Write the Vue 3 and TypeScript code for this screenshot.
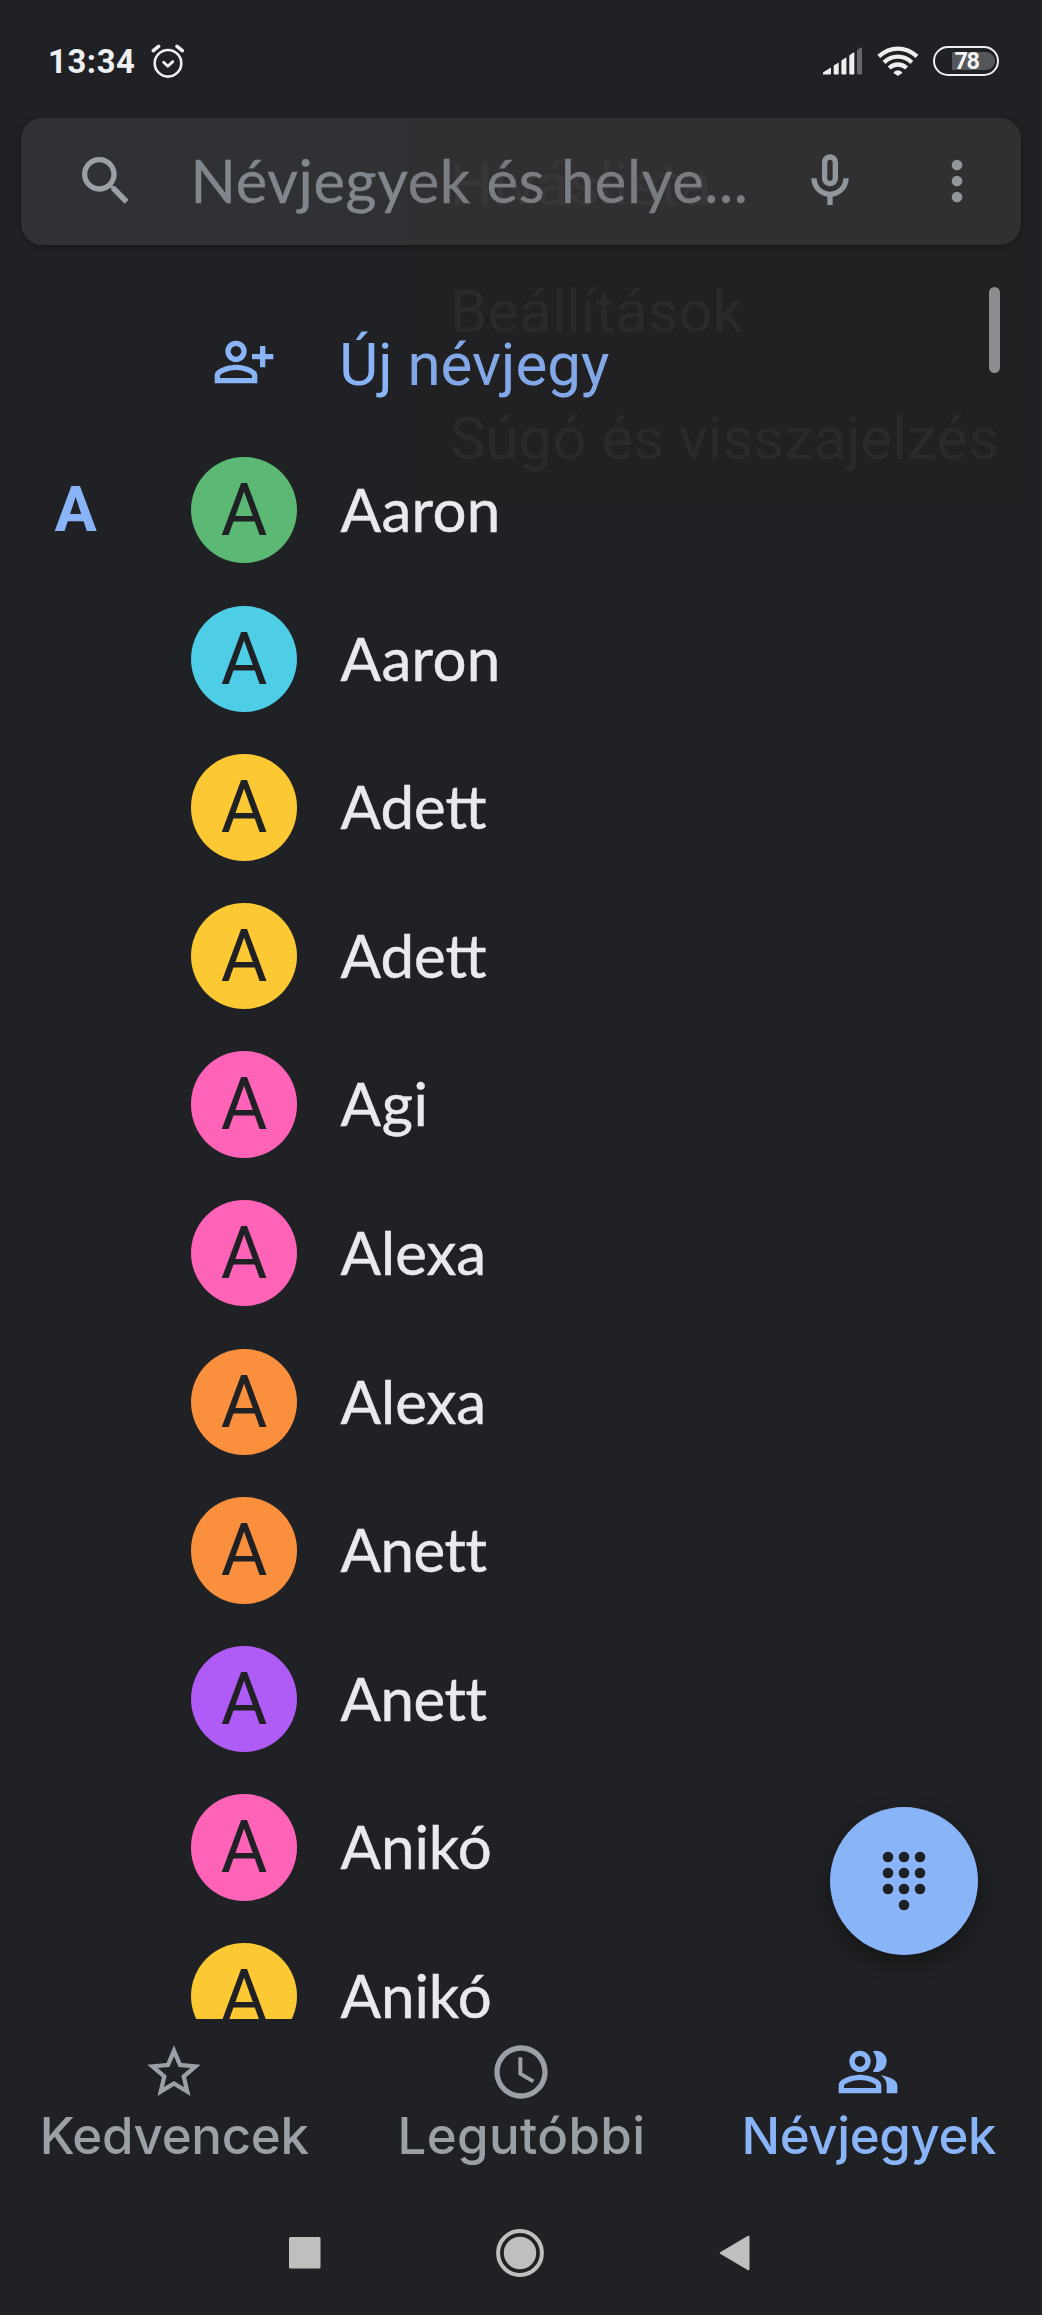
<script setup lang="ts">
interface Contact {
  name: string
  color: string
  spacing?: number
}

const green = '#5bb974'
const cyan = '#4ecde6'
const yellow = '#fcc934'
const pink = '#ff63b8'
const orange = '#fa903e'
const purple = '#af5cf7'

const contacts: Contact[] = [
  { name: 'Aaron', color: green, spacing: 0.3 },
  { name: 'Aaron', color: cyan, spacing: 0.3 },
  { name: 'Adett', color: yellow },
  { name: 'Adett', color: yellow },
  { name: 'Agi', color: pink, spacing: 0.6 },
  { name: 'Alexa', color: pink },
  { name: 'Alexa', color: orange },
  { name: 'Anett', color: orange, spacing: -0.5 },
  { name: 'Anett', color: purple, spacing: -0.5 },
  { name: 'Anikó', color: pink },
  { name: 'Anikó', color: yellow },
]

const menuItems: string[] = ['Híváslista', 'Beállítások', 'Súgó és visszajelzés']

const keypadDots: [number, number][] = [
  [6, 3], [12, 3], [18, 3],
  [6, 9], [12, 9], [18, 9],
  [6, 15], [12, 15], [18, 15],
  [12, 21],
]
</script>

<template>
  <div class="screen">
    <header class="status">
      <span class="time">13:34</span>
      <svg class="alarm" viewBox="0 0 34 34" width="34" height="34" fill="none" stroke="#eeeff1" stroke-linecap="round">
        <circle cx="17" cy="19.3" r="13.3" stroke-width="2.6" />
        <path d="M12.6 18.2l4.2 4 5-4.6" stroke-width="2.8" stroke-linejoin="round" />
        <path d="M2.3 6.6L7.6 2.3M31.3 6.6L26 2.3" stroke-width="3.6" />
      </svg>
      <span class="grow"></span>
      <svg class="signal" viewBox="0 0 39 28" width="39" height="28" fill="#eeeff1">
        <path d="M0 27.6v-2.2l7.4-4.6q.6-.2.6.4v5.4q0 1-1 1z" />
        <path d="M10.7 18.6l5-3v11q0 1-1 1h-3q-1 0-1-1z" />
        <path d="M18.4 13.4l5-3.2v16.4q0 1-1 1h-3q-1 0-1-1z" />
        <path d="M26.3 8.4l4-2.8q1-.5 1 .6v20.4q0 1-1 1h-3q-1 0-1-1z" />
        <path d="M34 3.2l4-2.8q1-.5 1 .6v25.6q0 1-1 1h-3q-1 0-1-1z" fill="#67686b" />
      </svg>
      <svg class="wifi" viewBox="0 0 42 30" width="42" height="30" fill="none" stroke="#eeeff1" stroke-width="4.3">
        <path d="M1.8 10.4Q10.6 2.6 20.900 2.6t19.100 7.8" />
        <path d="M7 16.300q6.200-5.600 13.900-5.600t13.900 5.600" />
        <path d="M12.200 22q3.900-3.500 8.700-3.500t8.700 3.500" />
        <path d="M16.800 26q4.100-3.400 8.200 0 .4.600-.2 1.200L21.600 29.600q-.7.500-1.400 0L17 27.200q-.6-.6-.2-1.200z" fill="#eeeff1" stroke="none" />
      </svg>
      <span class="battery"><span class="level">78</span></span>
    </header>

    <div class="search">
      <svg class="icon" viewBox="0 0 24 24" fill="#9aa0a6">
        <path d="M15.5 14h-.79l-.28-.27C15.41 12.59 16 11.11 16 9.5 16 5.91 13.09 3 9.5 3S3 5.91 3 9.5 5.91 16 9.5 16c1.61 0 3.09-.59 4.23-1.57l.27.28v.79l5 4.99L20.49 19l-4.99-5zm-6 0C7.01 14 5 11.99 5 9.5S7.01 5 9.5 5 14 7.01 14 9.5 11.99 14 9.5 14z" />
      </svg>
      <span class="hint">Névjegyek és helye...</span>
      <svg class="icon" viewBox="0 0 24 24" fill="#9aa0a6">
        <path fill-rule="evenodd" d="M12 14c1.66 0 3-1.34 3-3V5c0-1.66-1.34-3-3-3S9 3.34 9 5v6c0 1.66 1.34 3 3 3zm-1-9c0-.55.45-1 1-1s1 .45 1 1v6c0 .55-.45 1-1 1s-1-.45-1-1V5zm6 6c0 2.76-2.24 5-5 5s-5-2.24-5-5H5c0 3.53 2.61 6.43 6 6.92V21h2v-3.08c3.39-.49 6-3.39 6-6.92h-2z" />
      </svg>
      <svg class="icon more" viewBox="0 0 24 24" fill="#9aa0a6">
        <circle cx="12" cy="6" r="2" /><circle cx="12" cy="12" r="2" /><circle cx="12" cy="18" r="2" />
      </svg>
    </div>

    <main class="list">
      <div class="row">
        <span class="index"></span>
        <span class="slot">
          <svg class="icon" viewBox="0 0 24 24" fill="#8ab4f8">
            <path fill-rule="evenodd" d="M9 4a4 4 0 1 0 0 8 4 4 0 0 0 0-8zm0 6a2 2 0 1 1 0-4 2 2 0 0 1 0 4zM9 13c-2.67 0-8 1.34-8 4v3h16v-3c0-2.66-5.33-4-8-4zm6 5H3v-.9C3.2 16.3 6.3 15 9 15s5.8 1.3 6 2.1v.9zM18 6h2v3h3v2h-3v3h-2v-3h-3V9h3z" />
          </svg>
        </span>
        <span class="new">Új névjegy</span>
      </div>
      <div v-for="(c, i) in contacts" :key="i" class="row">
        <span class="index">{{ i === 0 ? 'A' : '' }}</span>
        <span class="slot"><span class="avatar" :style="{ background: c.color }">{{ c.name[0] }}</span></span>
        <span class="name" :style="{ letterSpacing: (c.spacing ?? 0) + 'px' }">{{ c.name }}</span>
      </div>
      <span class="scrollbar"></span>
    </main>

    <nav class="tabs">
      <div class="tab">
        <svg class="icon" viewBox="0 0 24 24" fill="#9aa0a6">
          <path d="M22 9.24l-7.19-.62L12 2 9.19 8.63 2 9.24l5.46 4.73L5.82 21 12 17.27 18.18 21l-1.63-7.03L22 9.24zM12 15.4l-3.76 2.27 1-4.28-3.32-2.88 4.38-.38L12 6.1l1.71 4.04 4.38.38-3.32 2.88 1 4.28L12 15.4z" />
        </svg>
        <span>Kedvencek</span>
      </div>
      <div class="tab middle">
        <svg class="icon" viewBox="0 0 24 24" fill="#9aa0a6">
          <path d="M11.99 2C6.47 2 2 6.48 2 12s4.47 10 9.99 10C17.52 22 22 17.52 22 12S17.52 2 11.99 2zM12 20c-4.42 0-8-3.58-8-8s3.58-8 8-8 8 3.58 8 8-3.58 8-8 8zm.5-13.5H11V13l5.25 3.15.75-1.23-4.5-2.67z" />
        </svg>
        <span>Legutóbbi</span>
      </div>
      <div class="tab active">
        <svg class="icon" viewBox="0 0 24 24" fill="#8ab4f8">
          <path fill-rule="evenodd" d="M9 4a4 4 0 1 0 0 8 4 4 0 0 0 0-8zm0 6a2 2 0 1 1 0-4 2 2 0 0 1 0 4zM9 13c-2.67 0-8 1.34-8 4v3h16v-3c0-2.66-5.33-4-8-4zm6 5H3v-.9C3.2 16.3 6.3 15 9 15s5.8 1.3 6 2.1v.9zM13.8 11.8c.4.13.8.2 1.2.2a4 4 0 0 0 0-8c-.4 0-.8.07-1.2.2a6 6 0 0 1 0 7.6zM16.8 13.2C18.1 14.1 19 15.3 19 17v3h4v-3c0-2.2-3.4-3.4-6.2-3.8z" />
        </svg>
        <span>Névjegyek</span>
      </div>
    </nav>

    <footer class="system">
      <svg viewBox="0 0 32 32" width="32" height="32"><rect width="31.5" height="31.5" rx="1.5" fill="#bfbfbf" /></svg>
      <svg viewBox="0 0 48 48" width="48" height="48">
        <circle cx="24" cy="24" r="21.9" fill="none" stroke="#bfbfbf" stroke-width="4" />
        <circle cx="24" cy="24" r="16.2" fill="#bfbfbf" />
      </svg>
      <svg viewBox="0 0 31 36" width="31" height="36"><path d="M29.5 1.7v32.6L1.7 18z" fill="#bfbfbf" stroke="#bfbfbf" stroke-width="2" stroke-linejoin="round" /></svg>
    </footer>

    <button class="fab" type="button">
      <svg viewBox="0 0 24 24" width="64" height="64" fill="#202124">
        <circle v-for="([x, y], i) in keypadDots" :key="i" :cx="x" :cy="y" r="2" />
      </svg>
    </button>

    <div class="menu">
      <div v-for="item in menuItems" :key="item" class="menu-item">{{ item }}</div>
    </div>
  </div>
</template>

<style>
body {
  background: #202124;
}
</style>

<style scoped>
.screen {
  position: relative;
  display: flex;
  flex-direction: column;
  width: 1042px;
  height: 2315px;
  overflow: hidden;
  background: #202124;
  color: #e8eaed;
  font-family: Lato, 'Liberation Sans', sans-serif;
}

.icon {
  display: block;
  flex: none;
  width: 64px;
  height: 64px;
}

.status {
  display: flex;
  flex: none;
  align-items: center;
  box-sizing: border-box;
  height: 117.7px;
  padding: 4px 43px 0 48px;
}

.time {
  color: #eeeff1;
  font: 700 32.8px/40px Roboto, sans-serif;
  letter-spacing: 0.6px;
  padding-top: 2px;
}

.alarm {
  margin-left: 15px;
}

.grow {
  flex: 1;
}

.signal {
  margin-right: 15px;
}

.wifi {
  margin-right: 14px;
}

.battery {
  display: flex;
  align-items: center;
  justify-content: flex-end;
  box-sizing: border-box;
  width: 66px;
  height: 29.5px;
  padding-right: 2.5px;
  border: 2.8px solid #eeeff1;
  border-radius: 15px;
}

.level {
  box-sizing: border-box;
  width: 43px;
  height: 18px;
  padding-left: 3px;
  border-radius: 1px 9px 9px 1px;
  background: #55565a;
  color: #f4f4f5;
  font: 700 23.5px/19px Roboto, sans-serif;
  letter-spacing: -1.5px;
}

.search {
  display: flex;
  flex: none;
  align-items: center;
  box-sizing: border-box;
  height: 127.3px;
  margin: 0 21px;
  padding: 0 32px 0 53px;
  border-radius: 21px;
  background: #303134;
  box-shadow: 0 1px 4px rgba(0, 0, 0, 0.45);
}

.hint {
  flex: 1;
  margin-left: 52.5px;
  padding-bottom: 2px;
  color: #80868b;
  font-size: 59.6px;
  line-height: 72px;
  letter-spacing: 0.63px;
  white-space: nowrap;
  -webkit-text-stroke: 0.4px #80868b;
}

.more {
  margin-left: 63.5px;
}

.list {
  position: relative;
  flex: none;
  box-sizing: border-box;
  height: 1774px;
  padding-top: 42.4px;
  overflow: hidden;
}

.row {
  display: flex;
  align-items: center;
  height: 148.6px;
}

.index {
  width: 191px;
  box-sizing: border-box;
  padding: 0 0 1px 54.5px;
  color: #8ab4f8;
  font: 700 63px/74px Roboto, sans-serif;
}

.slot {
  display: flex;
  justify-content: center;
  width: 106.3px;
}

.avatar {
  width: 106.3px;
  height: 106.3px;
  border-radius: 50%;
  color: #202124;
  font: 400 71.5px/108px Roboto, sans-serif;
  text-align: center;
}

.name {
  margin-left: 43.2px;
  padding-bottom: 2.4px;
  font-size: 60px;
  line-height: 72px;
  -webkit-text-stroke: 0.5px #e8eaed;
}

.new {
  margin-left: 42px;
  padding-top: 7.5px;
  color: #8ab4f8;
  font: 400 60px/72px Roboto, sans-serif;
}

.scrollbar {
  position: absolute;
  top: 42.5px;
  right: 42.5px;
  width: 10.5px;
  height: 85.5px;
  border-radius: 6px;
  background: #949699;
}

.tabs {
  display: flex;
  flex: none;
  height: 171px;
  color: #9aa0a6;
  font: 500 51px/62px Inter, sans-serif;
}

.tab {
  display: flex;
  flex: 1 1 0;
  flex-direction: column;
  align-items: center;
  padding-top: 21.5px;
  letter-spacing: -0.3px;
}

.tab span {
  margin: 1px 0 0 1px;
}

.tab.middle {
  letter-spacing: 0.35px;
}

.tab.active {
  color: #8ab4f8;
  letter-spacing: -0.4px;
}

.system {
  display: flex;
  flex: none;
  align-items: center;
  justify-content: space-between;
  height: 125.5px;
  padding: 0 292.5px 0 289px;
}

.fab {
  position: absolute;
  top: 1806.6px;
  left: 829.7px;
  display: flex;
  align-items: center;
  justify-content: center;
  width: 148.5px;
  height: 148.5px;
  padding: 0;
  border: 0;
  border-radius: 50%;
  background: #8ab4f8;
  box-shadow: 0 8px 20px rgba(0, 0, 0, 0.35);
}

.menu {
  position: absolute;
  top: 121px;
  left: 409px;
  box-sizing: border-box;
  width: 612px;
  padding-left: 41px;
  background: rgba(48, 44, 38, 0.08);
  color: rgba(110, 108, 106, 0.13);
  font: 400 60px/127px Roboto, sans-serif;
  letter-spacing: -0.06px;
  white-space: nowrap;
  pointer-events: none;
}
</style>
